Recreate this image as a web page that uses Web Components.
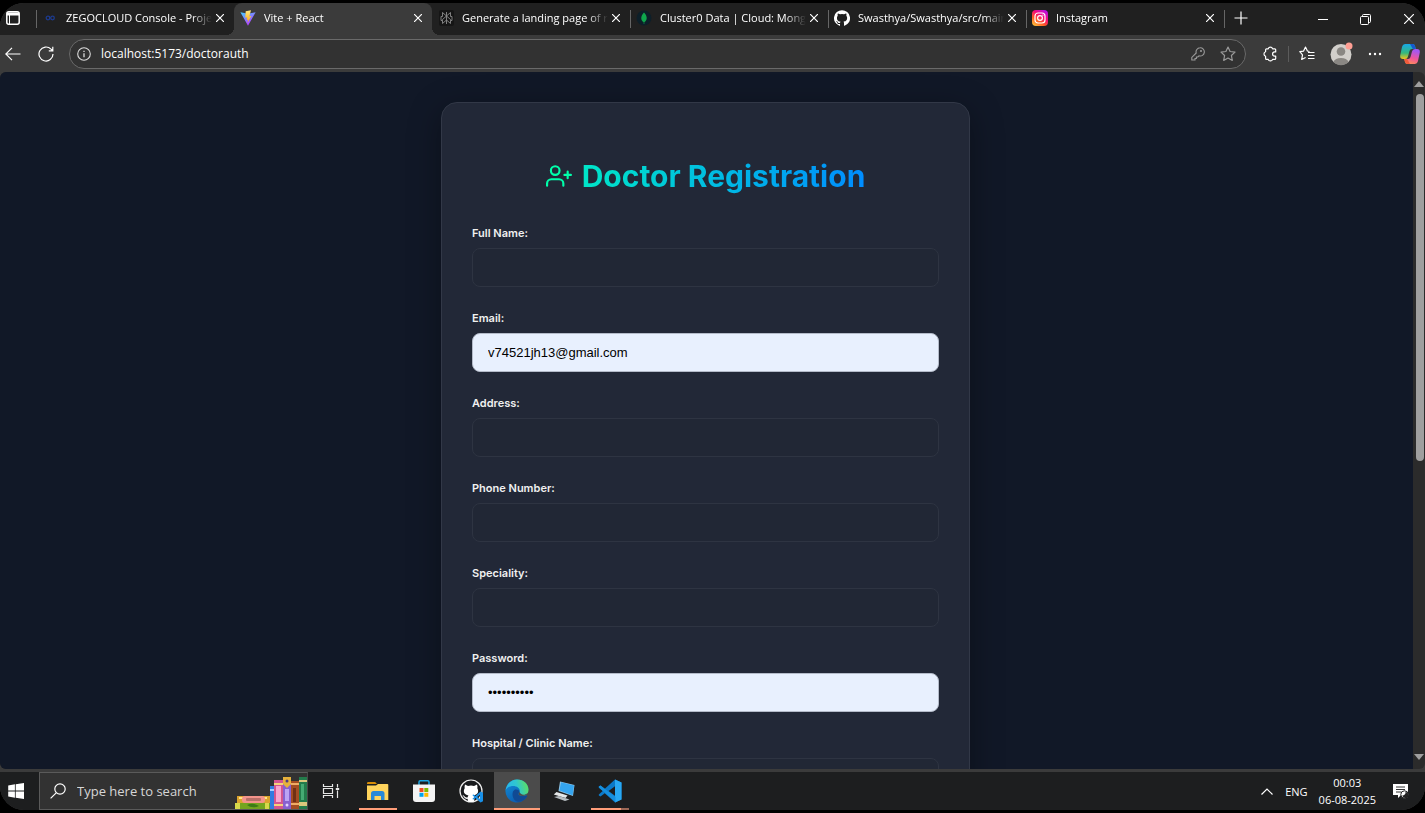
<!DOCTYPE html>
<html lang="en">
<head>
<meta charset="utf-8">
<title>Vite + React</title>
<style>
html, body { margin: 0; height: 100%; background: #000; overflow: hidden; }
body { font-family: "Open Sans", "Noto Sans", sans-serif; font-size: 12px; color: #fff; }
</style>
</head>
<body>
<desktop-shell>
  <tab-strip slot="tabs">
    <browser-tab separator label="ZEGOCLOUD Console - Proje">
      <svg width="16" height="16" viewBox="0 0 16 16" fill="none" stroke="#1d3a8c" stroke-width="1.300"><circle cx="6" cy="8" r="1.800"/><circle cx="10.500" cy="8" r="1.800"/></svg>
    </browser-tab>
    <browser-tab active label="Vite + React">
      <svg width="16" height="16" viewBox="0 0 16 16"><defs><linearGradient id="v" x1="0" y1="0" x2="0.6" y2="1"><stop stop-color="#41d1ff"/><stop offset="1" stop-color="#bd34fe"/></linearGradient><linearGradient id="y" x1="0" y1="0" x2="0" y2="1"><stop stop-color="#ffea83"/><stop offset="1" stop-color="#ffa800"/></linearGradient></defs><path fill="url(#v)" d="M.4 2.300 8 15.800 15.600 2.300 8 3.700z"/><path fill="url(#y)" d="M11 .2 5.700 1.300 5.300 7.700 7.200 7.300 6.600 10 8.100 9.600 7.500 12.800 11.400 6 9.300 6.400z"/></svg>
    </browser-tab>
    <browser-tab label="Generate a landing page of r">
      <svg width="16" height="16" viewBox="0 0 16 16"><rect x="1" width="15" height="16" rx="2" fill="#151515"/><path d="M8.500 2v12M4.500 2.500l4 3.500 4-3.500v4h1.500v4h-1.500v3l-4-3.500-4 3.500v-3H3v-4h1.500zM4.500 10.500v-1l4-3.500 4 3.500v1" fill="none" stroke="#8b8b8b" stroke-width=".9"/></svg>
    </browser-tab>
    <browser-tab separator label="Cluster0 Data | Cloud: Mong">
      <svg width="16" height="16" viewBox="0 0 16 16"><circle cx="8" cy="8" r="7.500" fill="#0d1f29"/><path d="M8 2.500c4 4 3.200 8 .3 9.700V14h-.6v-1.800C4.800 10.500 4 6.500 8 2.500z" fill="#0fa64c"/></svg>
    </browser-tab>
    <browser-tab separator label="Swasthya/Swasthya/src/main">
      <svg width="16" height="16" viewBox="0 0 16 16" fill="#fff"><path d="M8 .2a8 8 0 0 0-2.530 15.590c.4.070.550-.170.550-.380v-1.490c-2.010.370-2.530-.490-2.690-.940-.090-.230-.480-.940-.820-1.130-.280-.150-.680-.520-.010-.530.630-.010 1.080.580 1.230.820.720 1.210 1.870.870 2.330.660.070-.520.280-.870.510-1.070-1.780-.2-3.640-.890-3.640-3.950 0-.870.310-1.590.820-2.150-.080-.2-.360-1.020.080-2.120 0 0 .670-.210 2.200.820a7.400 7.400 0 0 1 4 0c1.530-1.040 2.200-.820 2.200-.820.440 1.100.160 1.920.080 2.120.510.560.820 1.270.820 2.150 0 3.070-1.870 3.750-3.650 3.950.290.250.540.730.540 1.480v2.200c0 .210.150.460.550.380A8 8 0 0 0 8 .2z"/></svg>
    </browser-tab>
    <browser-tab separator label="Instagram">
      <svg width="16" height="16" viewBox="0 0 16 16"><defs><linearGradient id="g" x1="0.1" y1="1" x2="0.8" y2="0"><stop stop-color="#ffc83d"/><stop offset=".35" stop-color="#ff5a24"/><stop offset=".65" stop-color="#f5087a"/><stop offset="1" stop-color="#b610e8"/></linearGradient></defs><rect width="16" height="16" rx="4" fill="url(#g)"/><g fill="none" stroke="#fff" stroke-width="1.200"><rect x="3" y="3" width="10" height="10" rx="3"/><circle cx="8" cy="8" r="2.400"/></g><circle cx="10.900" cy="5.100" r=".7" fill="#fff"/></svg>
    </browser-tab>
  </tab-strip>
  <browser-toolbar slot="toolbar" address="localhost:5173/doctorauth"></browser-toolbar>
  <page-viewport slot="page">
    <registration-card heading="Doctor Registration">
      <form-field label="Full Name:" type="text"></form-field>
      <form-field label="Email:" type="email" value="v74521jh13@gmail.com" filled></form-field>
      <form-field label="Address:" type="text"></form-field>
      <form-field label="Phone Number:" type="tel"></form-field>
      <form-field label="Speciality:" type="text"></form-field>
      <form-field label="Password:" type="password" value="doctorpass" filled></form-field>
      <form-field label="Hospital / Clinic Name:" type="text"></form-field>
    </registration-card>
  </page-viewport>
  <task-bar slot="taskbar">
    <task-item label="Task View">
      <svg width="18" height="16" viewBox="0 0 18 16" fill="none" stroke="#e6e6e6" stroke-width="1.200"><path d="M1.500 1v2.500h9V1M1.500 15v-2.500h9V15M1.500 5.500h9v5h-9zM15.500 1v3.500M15.500 7.500V15"/><path d="M13.800 6h3.400" stroke-width="2"/></svg>
    </task-item>
    <task-item label="File Explorer" running>
      <svg width="22" height="20" viewBox="0 0 22 20"><path d="M0 2.200Q0 1 1.200 1h7L10 3H0z" fill="#d98e06"/><path d="M0 4.500h9l2-1.500h9.500q.8 0 .8 1V19H0z" fill="#ffd45c"/><path d="M4 19v-6.500Q4 10 6.500 10h8.500q2.500 0 2.500 2.500V19h-3.500v-4H7.500v4z" fill="#2789d8"/></svg>
    </task-item>
    <task-item label="Microsoft Store">
      <svg width="22" height="22" viewBox="0 0 22 22"><path d="M6 6V2q0-1.200 1.200-1.200h7.600Q16 .8 16 2v4" fill="none" stroke="#1ba3e0" stroke-width="1.500"/><path d="M0 4.500h22V19q0 3-3 3H3q-3 0-3-3z" fill="#f4f4f4"/><path fill="#f04e23" d="M6.500 8h4v4h-4z"/><path fill="#7fba00" d="M11.300 8h4v4h-4z"/><path fill="#00a4ef" d="M6.500 12.800h4v4h-4z"/><path fill="#ffb900" d="M11.300 12.800h4v4h-4z"/></svg>
    </task-item>
    <task-item label="GitHub Codespaces">
      <svg width="24" height="24" viewBox="0 0 24 24"><circle cx="12" cy="12" r="11" fill="#17191c" stroke="#eee" stroke-width="1.200"/><path d="M6 5.500 9 7q3-.8 6 0l3-1.500q.8 2 .3 3.800c2 3.700.3 6.500-3.800 7.200q.8 1 .8 2v4q-3.300 1-6.600 0v-2.700q-3 .5-4-2c-.4-.8-1-1-1.200-1.500 1.500-.3 2 1 2.700 1.700q1 .8 2.500.3.100-1.100.8-1.800c-4.100-.7-5.800-3.500-3.800-7.200Q5.300 7.500 6 5.500z" fill="#fff"/><path d="M21.500 12.500 24 13.700v8.600l-2.500 1.200-5-4.500-2 1.600-1.200-.7 2-1.900-2-1.900 1.200-.7 2 1.600zM21 15.800 18.200 18l2.800 2.200z" fill="#1890e8" fill-rule="evenodd"/></svg>
    </task-item>
    <task-item label="Microsoft Edge" running focused>
      <svg width="24" height="24" viewBox="0 0 24 24"><defs><linearGradient id="e1" x1="0" y1="0.5" x2="1" y2="0.3"><stop stop-color="#28b5ec"/><stop offset=".5" stop-color="#30c8cf"/><stop offset="1" stop-color="#5fe05b"/></linearGradient><linearGradient id="e2" x1="0" y1="0" x2="0.5" y2="1"><stop stop-color="#1391d8"/><stop offset="1" stop-color="#0b5cb0"/></linearGradient></defs><path d="M23.500 10.700C23.500 5 18.500.5 12 .5A11.500 11.500 0 1 0 22.300 17l-3-2z" fill="url(#e2)"/><path d="M.6 11C1.800 4.500 6.500.5 12 .5c6.800 0 11.500 4.700 11.500 10.200 0 4-3 6.300-6.300 6.300-2.600 0-3.700-1-3.700-1.700 0-.8 1.300-1.200 1.300-3.300 0-2.800-2.900-5-6.600-5C4.800 7 1.800 8.700.6 11z" fill="url(#e1)"/><path d="M8 12.500c1-2.200 3.500-2.500 5.200-1.500 2.500 1.500 0 3.200.3 4.300.4 1.300 1.700 1.700 3.700 1.700 1.800 0 3.600-.3 5.100 0-1.800 3.700-5.500 5.800-9.300 5.800C8.500 22 6.500 16.500 8 12.500z" fill="#104a94"/><path d="M13.500 15.300c-.2-.7.7-1.500 1.200-2.500.3 2.500 4.200 4.600 8 1.200-.3 1.700-2.800 3-5.500 3-2.500 0-3.500-.9-3.700-1.700z" fill="#4b4b4b"/></svg>
    </task-item>
    <task-item label="Remote Desktop">
      <svg width="22" height="20" viewBox="0 0 22 20"><path d="M7 .5 21.500 4 20 15 5.500 10z" fill="#8fc4e6"/><path d="M8 1.200 21 4.600 19.600 14.300 6.500 9.600z" fill="#35a5ef"/><path d="m3.500 11 11 3.500-2 2.500L.8 13.500z" fill="#e4e7e8"/><path d="m1 16 5-1 10.500 3.500L12 20z" fill="#b7bdc1"/></svg>
    </task-item>
    <task-item label="Visual Studio Code" running stacked>
      <svg width="24" height="24" viewBox="0 0 24 24"><path d="M17 .5 23.500 3.500v17L17 23.500 6.800 14.200 2.500 17.500.8 16.500v-1L4.700 12 .8 8.500v-1l1.700-1 4.300 3.300zm0 6.700L10.600 12l6.400 4.800z" fill="#0b79c8" fill-rule="evenodd"/><path d="m17 .5 6.500 3v17l-6.500 3z" fill="#29a8f2"/><path d="m.8 7.500 1.700-1L17.500 18v5L.8 8.500z" fill="#168fde"/></svg>
    </task-item>
  </task-bar>
</desktop-shell>

<script>
// Registers an element whose shadow root is cloned from a template.
// `setup` receives the root and the host once per instance.
function define(name, html, setup) {
  const template = document.createElement('template');
  template.innerHTML = html;
  customElements.define(name, class extends HTMLElement {
    constructor() {
      super();
      this.attachShadow({ mode: 'open' }).append(template.content.cloneNode(true));
    }
    connectedCallback() {
      if (setup) setup(this.shadowRoot, this);
    }
  });
}

const resetButton = `button { appearance: none; border: 0; padding: 0; margin: 0; background: none; color: inherit; font: inherit;
  display: flex; align-items: center; justify-content: center; } svg { display: block; flex: none; }`;

define('desktop-shell', `
<style>
  :host { display: block; height: 100vh; box-sizing: border-box; padding: 3px 0; background: #000; }
  .screen { height: 100%; display: flex; flex-direction: column; overflow: hidden; border-radius: 24px; background: #3b3b3b; }
  main { flex: 1; min-height: 0; display: flex; padding-bottom: 3px; }
</style>
<div class="screen">
  <slot name="tabs"></slot>
  <slot name="toolbar"></slot>
  <main><slot name="page"></slot></main>
  <slot name="taskbar"></slot>
</div>`);

define('tab-strip', `
<style>
  ${resetButton}
  :host { display: flex; height: 32px; flex: none; background: #202020; }
  .workspaces { width: 24px; height: 30px; padding-left: 1px; margin-right: 12px; }
  .tabs { display: flex; flex: 0 1 1188px; min-width: 0; }
  .new { width: 34px; height: 30px; position: relative; }
  .new::before { content: ""; position: absolute; left: 0; top: 7px; height: 18px; width: 1px; background: #666; }
  .controls { margin-left: auto; display: flex; }
  .controls button { width: 43px; height: 32px; }
  .controls .close { width: 32px; margin-left: 6px; }
</style>
<button class="workspaces" aria-label="Tab actions"><svg width="14" height="14" viewBox="0 0 14 14" fill="none" stroke="#fff" stroke-width="1.500"><rect x=".8" y=".8" width="12.400" height="12.400" rx="2"/><path d="M1 3h12" stroke-width="3"/><path d="M3.500 4v9" stroke-width="1"/></svg></button>
<div class="tabs"><slot></slot></div>
<button class="new" aria-label="New tab"><svg width="14" height="14" viewBox="0 0 14 14" stroke="#fff" stroke-width="1.200"><path d="M7 .5v13M.5 7h13"/></svg></button>
<div class="controls">
  <button aria-label="Minimize"><svg width="10" height="10" viewBox="0 0 10 10" stroke="#fff"><path d="M0 5.500h10"/></svg></button>
  <button aria-label="Restore"><svg width="11" height="11" viewBox="0 0 11 11" fill="none" stroke="#fff"><rect x=".5" y="2.500" width="8" height="8" rx="1"/><path d="M2.500 2.500v-1q0-1 1-1h6q1 0 1 1v6q0 1-1 1h-1"/></svg></button>
  <button class="close" aria-label="Close"><svg width="10" height="10" viewBox="0 0 10 10" stroke="#fff" stroke-width="1.200"><path d="m0 0 10 10M10 0 0 10"/></svg></button>
</div>`);

define('browser-tab', `
<style>
  ${resetButton}
  :host { flex: 1 1 0; min-width: 0; display: flex; align-items: center; box-sizing: border-box; padding: 0 6px 2px; position: relative; }
  :host([active]) { background: #3b3b3b; border-radius: 8px 8px 0 0; }
  :host([active])::before, :host([active])::after { content: ""; position: absolute; bottom: 0; width: 8px; height: 8px; }
  :host([active])::before { right: 100%; background: radial-gradient(circle at 0 0, transparent 8px, #3b3b3b 8px); }
  :host([active])::after { left: 100%; background: radial-gradient(circle at 100% 0, transparent 8px, #3b3b3b 8px); }
  :host([separator])::before { content: ""; position: absolute; left: 0; top: 7px; height: 18px; width: 1px; background: #666; }
  .title { flex: 1; min-width: 0; height: 20px; gap: 8px; justify-content: flex-start; }
  .text { flex: 1; min-width: 0; overflow: hidden; white-space: nowrap; text-align: left; font-size: 11px; line-height: 20px;
    -webkit-mask-image: linear-gradient(90deg, #000 calc(100% - 20px), transparent); mask-image: linear-gradient(90deg, #000 calc(100% - 20px), transparent); }
  .close { width: 16px; height: 16px; }
</style>
<button class="title"><slot></slot><span class="text"></span></button>
<button class="close" aria-label="Close tab"><svg width="8" height="8" viewBox="0 0 8 8" stroke="#fff" stroke-width="1.200"><path d="m0 0 8 8M8 0 0 8"/></svg></button>`,
(root, host) => { root.querySelector('.text').textContent = host.getAttribute('label'); });

define('browser-toolbar', `
<style>
  ${resetButton}
  :host { display: flex; align-items: center; height: 37px; flex: none; background: #3b3b3b; }
  .back { width: 25px; height: 30px; }
  .refresh { width: 42px; height: 30px; }
  .bar { flex: 1; display: flex; align-items: center; box-sizing: border-box; height: 30px; margin: 0 8px 0 2px; padding: 0 2px 0 7px;
    border: 1px solid #6a6a6a; border-radius: 15px; background: #323232; }
  input { flex: 1; min-width: 0; border: 0; outline: 0; padding: 0; margin-left: 10px; background: none; color: #fff; font: inherit; font-size: 12px; }
  .bar button { width: 30px; height: 28px; }
  .tool { width: 32px; height: 30px; }
  .tool + .tool { margin-left: 2px; }
  .divider { width: 1px; height: 16px; margin: 0 2px; background: #5c5c5c; }
  .copilot { width: 34px; justify-content: flex-end; padding-right: 5px; }
</style>
<button class="back" aria-label="Back"><svg width="16" height="14" viewBox="0 0 16 14" fill="none" stroke="#fff" stroke-width="1.200"><path d="M15.500 7H.8M7 .8.8 7 7 13.200"/></svg></button>
<button class="refresh" aria-label="Refresh"><svg width="16" height="16" viewBox="0 0 16 16" fill="none" stroke="#fff" stroke-width="1.200"><path d="M15 8a7 7 0 1 1-2-4.900L14.500 4.600M14.800.8v4h-4"/></svg></button>
<div class="bar">
  <svg width="14" height="14" viewBox="0 0 14 14" fill="none" stroke="#ddd" stroke-width="1.100"><circle cx="7" cy="7" r="6.300"/><path d="M7 6.200v4M7 3.700v1.200" stroke-width="1.300"/></svg>
  <input type="text" aria-label="Address">
  <button aria-label="Saved passwords"><svg width="14" height="14" viewBox="0 0 14 14" fill="none" stroke="#999" stroke-width="1.100"><path d="M9 .8A4.100 4.100 0 1 1 8 8.800L6.800 10H5.400v1.500H4V13H.8v-2.600L5.200 6A4.100 4.100 0 0 1 9 .8z"/><circle cx="10" cy="4" r=".5"/></svg></button>
  <button aria-label="Add to favorites"><svg width="16" height="16" viewBox="0 0 16 16" fill="none" stroke="#999" stroke-width="1.200" stroke-linejoin="round"><path d="m8 1 2.100 4.500 4.900.6-3.600 3.400.9 4.900L8 12l-4.300 2.400.9-4.900L1 6.100l4.900-.6z"/></svg></button>
</div>
<button class="tool" aria-label="Extensions"><svg width="16" height="16" viewBox="0 0 16 16" fill="none" stroke="#fff" stroke-width="1.200" stroke-linejoin="round"><path d="M4.500 2.800h1.700a2.300 2.300 0 0 1 4.400 0h2.200q.9 0 .9.900v2.200h-1a2.100 2.100 0 0 0 0 4.200h1v2.300q0 .9-.9.900h-2.200a2.300 2.300 0 0 1-4.400 0H4.500q-.9 0-.9-.9v-2.200a2.300 2.300 0 0 1 0-4.400V3.700q0-.9.900-.9z"/></svg></button>
<span class="divider"></span>
<button class="tool" aria-label="Favorites"><svg width="16" height="16" viewBox="0 0 16 16" fill="none" stroke="#fff" stroke-width="1.200" stroke-linejoin="round"><path d="M10.500 5.500 8.400 5 6.500 1 4.600 5.100.8 5.700l2.700 3.100-.8 4.700 3.900-2M9 6.500h6.500M9 9.500h6.500M9 12.500h6.500"/></svg></button>
<button class="tool" aria-label="Profile"><svg width="24" height="24" viewBox="0 0 24 24"><circle cx="12" cy="12.500" r="10.500" fill="#d2cfcb"/><circle cx="12" cy="9.500" r="4.300" fill="#8a8783"/><path d="M4.500 20a7.800 5.500 0 0 1 15 0 10.500 10.500 0 0 1-15 0z" fill="#8a8783"/><circle cx="20" cy="4" r="3.500" fill="#ff9f94"/></svg></button>
<button class="tool" aria-label="Settings and more"><svg width="14" height="4" viewBox="0 0 14 4" fill="#fff"><circle cx="2" cy="2" r="1.200"/><circle cx="7" cy="2" r="1.200"/><circle cx="12" cy="2" r="1.200"/></svg></button>
<button class="copilot" aria-label="Copilot"><svg width="20" height="20" viewBox="0 0 20 20"><defs><linearGradient id="a" x1="0" y1="0" x2="0" y2="1"><stop stop-color="#17a8e8"/><stop offset=".6" stop-color="#35b87c"/><stop offset="1" stop-color="#f2c51c"/></linearGradient><linearGradient id="b" x1="0.3" y1="0" x2="0" y2="1"><stop stop-color="#a557f0"/><stop offset=".5" stop-color="#f0569a"/><stop offset="1" stop-color="#ff9a4b"/></linearGradient></defs><path d="M5.500 0h7q2 0 2.500 2l.8 3H12q-2 0-2.500 2L8 12.500Q7.500 15 5 15H3q-3.500 0-2.700-4L2 3Q2.800 0 5.500 0z" fill="url(#a)"/><path d="M10 0h2.500q2 0 2.500 2l.8 3h-3z" fill="#1559cf"/><path d="M14.500 20h-7q-2 0-2.500-2l-.8-3H8q2 0 2.500-2L12 7.500Q12.500 5 15 5h2q3.500 0 2.700 4L18 17q-.8 3-3.500 3z" fill="url(#b)"/><path d="M10 20H7.500q-2 0-2.500-2l-.8-3h3z" fill="#f05b3a"/></svg></button>`,
(root, host) => { root.querySelector('input').value = host.getAttribute('address'); });

define('page-viewport', `
<style>
  ${resetButton}
  :host { flex: 1; min-width: 0; display: flex; overflow: hidden; background: #2b2b2b; border-radius: 6px; }
  .page { flex: 1; min-width: 0; overflow: hidden; box-sizing: border-box; padding: 30px 2px 0 0; background: #111827; font-family: Inter, sans-serif; }
  .scroll { width: 12px; flex: none; display: flex; flex-direction: column; align-items: center; padding: 8px 0; box-sizing: border-box; }
  .scroll button { width: 12px; height: 8px; }
  .track { flex: 1; width: 8px; margin: 6px 0 4px 2px; }
  .thumb { height: 56%; border-radius: 4px; background: #9f9f9f; }
</style>
<div class="page"><slot></slot></div>
<div class="scroll">
  <button aria-label="Scroll up"><svg width="10" height="6" viewBox="0 0 10 6" fill="#9f9f9f"><path d="M5 0 10 6H0z"/></svg></button>
  <div class="track"><div class="thumb"></div></div>
  <button aria-label="Scroll down"><svg width="10" height="6" viewBox="0 0 10 6" fill="#9f9f9f"><path d="M0 0h10L5 6z"/></svg></button>
</div>`);

define('registration-card', `
<style>
  :host { display: block; max-width: 529px; box-sizing: border-box; margin: 0 auto; padding: 53px 30px 30px; border: 1px solid #323847;
    border-radius: 16px; background: #222837; box-shadow: 0 8px 32px rgba(0, 0, 0, .35); }
  h1 { display: flex; align-items: center; justify-content: center; gap: 10px; margin: 0 0 29px; font-size: 30px; line-height: 40px; font-weight: 700; }
  h1 span { color: transparent; background: linear-gradient(90deg, #00e6c8, #008cff); -webkit-background-clip: text; background-clip: text; }
  form { display: flex; flex-direction: column; gap: 23px; }
</style>
<h1><svg width="26" height="26" viewBox="0 0 24 24" fill="none" stroke="#00ffaa" stroke-width="2" stroke-linecap="round" stroke-linejoin="round"><path d="M16 21v-2a4 4 0 0 0-4-4H5a4 4 0 0 0-4 4v2"/><circle cx="8.500" cy="7" r="4"/><path d="M20 8v6M23 11h-6"/></svg><span></span></h1>
<form><slot></slot></form>`,
(root, host) => { root.querySelector('h1 span').textContent = host.getAttribute('heading'); });

define('form-field', `
<style>
  :host { display: flex; flex-direction: column; gap: 7px; }
  label { font-size: 11px; line-height: 16px; font-weight: 600; color: #f0f0f0; }
  input { height: 39px; width: 100%; box-sizing: border-box; margin: 0; padding: 0 15px; border: 1px solid #2e3442; border-radius: 8px; outline: 0;
    background: #212735; color: #fff; font: 13px "Liberation Sans", Arial, sans-serif; }
  :host([filled]) input { background: #e8f0fe; color: #000; border-color: #b4bbc9; }
</style>
<label for="control"></label>
<input id="control">`,
(root, host) => {
  root.querySelector('label').textContent = host.getAttribute('label');
  const input = root.querySelector('input');
  input.type = host.getAttribute('type');
  input.value = host.getAttribute('value') || '';
});

define('task-bar', `
<style>
  ${resetButton}
  :host { display: flex; height: 38px; flex: none; background: #1d1e1f; }
  .start { width: 39px; padding-right: 7px; box-sizing: border-box; }
  .search { display: flex; align-items: center; width: 269px; box-sizing: border-box; padding-left: 10px; border: 1px solid #5a5a5a; border-right-color: #484848; background: #323232; overflow: hidden; }
  .search input { flex: 1; min-width: 0; border: 0; outline: 0; padding: 0; margin: 0 0 0 11px; background: none; color: #fff; font: inherit; font-size: 13px; }
  .search input::placeholder { color: #d6d6d6; opacity: 1; }
  .search .books { align-self: flex-end; }
  .items { display: flex; }
  .tray { margin-left: auto; display: flex; align-items: center; }
  .chevron { width: 24px; height: 38px; }
  .lang { height: 38px; margin: 0 11px 0 6px; font-size: 11px; }
  .clock { flex-direction: column; height: 38px; font-size: 11px; line-height: 17px; }
  .notify { width: 49px; height: 38px; }
</style>
<button class="start" aria-label="Start"><svg width="16" height="16" viewBox="0 0 16 16" fill="#fff"><path d="M.2 2.400 6.900 1.300V7.600H.2zM7.700 1.200 16 0v7.600H7.700zM.2 8.400h6.700v6.300L.2 13.600zM7.700 8.400H16V16l-8.300-1.200z"/></svg></button>
<div class="search">
  <svg width="16" height="16" viewBox="0 0 16 16" fill="none" stroke="#fff" stroke-width="1.200"><circle cx="10" cy="6" r="5.200"/><path d="M6.200 9.800.6 15.400"/></svg>
  <input type="text" aria-label="Search" placeholder="Type here to search">
  <svg class="books" width="72" height="32" viewBox="0 0 72 32">
    <path d="M2 19h33v7H2z" fill="#dba32d"/><path d="M4 20h28v2H4z" fill="#ffe28a"/><rect x="7" y="19" width="23" height="7" rx="3" fill="#f3948b"/><rect x="11" y="21" width="15" height="3" rx="1" fill="#b96f68"/>
    <path d="M0 26h35v6H0z" fill="#74a51f"/><path d="M0 26h5v6H0zM30 26h4v6h-4z" fill="#d7d94a"/><path d="M12 28q6-3 12 1-7 3-12-1z" fill="#3c7b16"/>
    <path d="M35 9h4v23h-4z" fill="#327be0"/><path d="M35 12h4v2h-4z" fill="#a7d0ff"/>
    <path d="M39 3h9v29h-9z" fill="#d4568f"/><path d="M39 6h9v2h-9zM39 27h9v2h-9z" fill="#f4d27b"/><path d="M41 9h5v16h-5z" fill="#f9a5cd"/>
    <path d="M48 0h8v32h-8z" fill="#8761cf"/><path d="M48 0h8v7l-4 4-4-4z" fill="#e7b23b"/><path d="M50 12h4v12h-4z" fill="#bca3f4"/><circle cx="52" cy="4" r="1.500" fill="#4c3c83"/><circle cx="52" cy="28" r="1.500" fill="#e0d1ff"/>
    <path d="M56 4h8v28h-8z" fill="#a44d22"/><path d="M56 6h8v2h-8zM56 26h8v2h-8z" fill="#efab65"/><path d="M58 11h3v14h-3z" fill="#703014"/>
    <path d="M64 0h8v32h-8z" fill="#237b4b"/><path d="M64 3h8v2h-8zM64 25h8v4h-8z" fill="#dac77c"/><path d="M66 7h3v16h-3z" fill="#46aa73"/>
  </svg>
</div>
<div class="items"><slot></slot></div>
<div class="tray">
  <button class="chevron" aria-label="Show hidden icons"><svg width="12" height="7" viewBox="0 0 12 7" fill="none" stroke="#fff" stroke-width="1.200"><path d="M.5 6.500 6 1l5.500 5.500"/></svg></button>
  <button class="lang">ENG</button>
  <button class="clock"><span>00:03</span><span>06-08-2025</span></button>
  <button class="notify" aria-label="Notifications"><svg width="16" height="16" viewBox="0 0 16 16"><path d="M0 1h15v11H8l-3 3v-3H0z" fill="#fff"/><path d="M3 4h9M3 6.500h9M3 9h5" stroke="#333"/><circle cx="11.500" cy="11.500" r="3.700" fill="#fff" stroke="#222"/><path d="M12.500 9a3 3 0 1 1-3.300 3.500 3 3 0 0 0 3.300-3.500z" fill="#222"/></svg></button>
</div>`);

define('task-item', `
<style>
  ${resetButton}
  :host { display: flex; width: 46px; height: 38px; position: relative; }
  :host(:nth-child(2n)) { margin-left: 1px; }
  button { flex: 1; }
  :host([focused]) { background: #4b4b4b; }
  :host([running])::after { content: ""; position: absolute; left: 4px; right: 4px; bottom: 0; height: 2px; background: #ff9d79; }
  :host([focused])::after { left: 0; right: 0; }
  :host([stacked])::after { background: linear-gradient(90deg, #ff9d79 30px, #9c6856 30px); }
</style>
<button><slot></slot></button>`,
(root, host) => root.querySelector('button').setAttribute('aria-label', host.getAttribute('label')));
</script>
</body>
</html>
